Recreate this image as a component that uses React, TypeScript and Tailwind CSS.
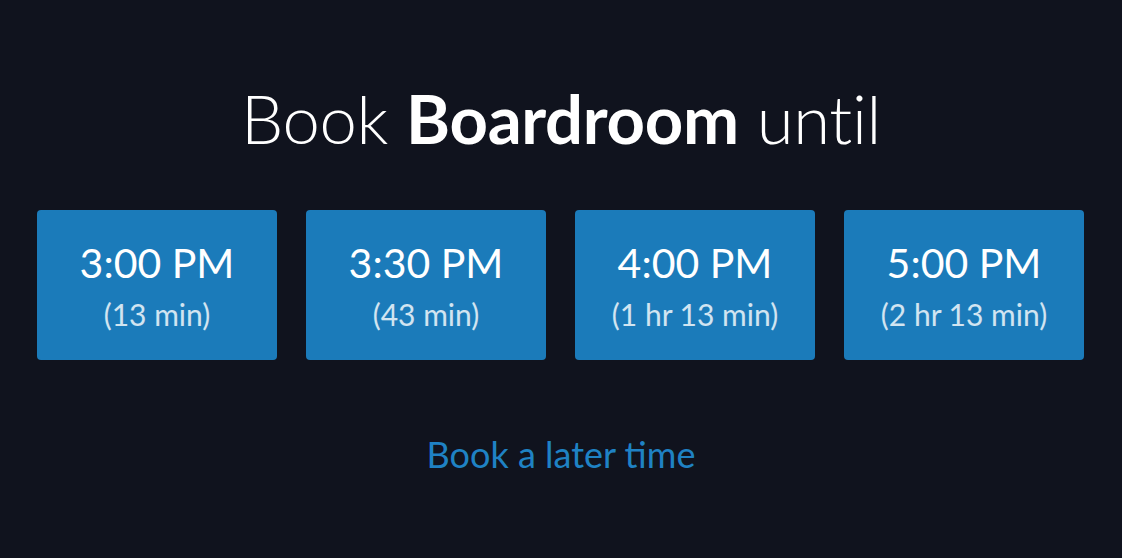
const SLOTS = [
  { time: '3:00 PM', rel: '(13 min)' },
  { time: '3:30 PM', rel: '(43 min)' },
  { time: '4:00 PM', rel: '(1 hr 13 min)' },
  { time: '5:00 PM', rel: '(2 hr 13 min)' },
];

export default function App() {
  return (
    <div className="w-[1122px] h-[558px] bg-[#10131e] text-white font-['Lato',sans-serif] flex flex-col items-center overflow-hidden">
      <h1 className="mt-[78px] h-[80px] flex items-center text-[67px] font-light leading-none tracking-[-0.3px]">
        Book&nbsp;<span className="font-bold">Boardroom</span>&nbsp;until
      </h1>

      <div className="mt-[52px] w-full px-[37px] flex gap-[29px]">
        {SLOTS.map((s) => (
          <button
            key={s.time}
            className="w-[240px] h-[150px] rounded-[4px] bg-[#1b7bba] flex flex-col items-center justify-center"
          >
            <span className="text-[41px] leading-none">{s.time}</span>
            <span className="mt-[16px] text-[30px] leading-none text-white/80">{s.rel}</span>
          </button>
        ))}
      </div>

      <a className="mt-[76px] text-[36px] leading-none text-[#1f82c4]">Book a later time</a>
    </div>
  );
}
